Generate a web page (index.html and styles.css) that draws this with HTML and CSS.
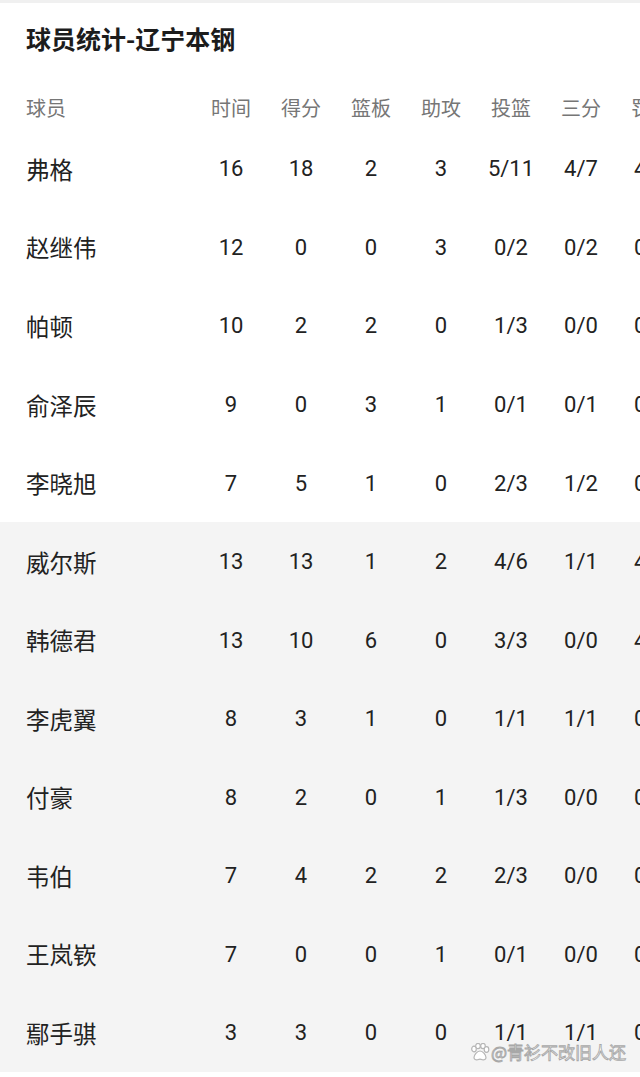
FILE: index.html
```html
<!DOCTYPE html>
<html lang="zh">
<head>
<meta charset="utf-8">
<link rel="stylesheet" href="styles.css">
</head>
<body>
<div class="page">
  <div class="topband"></div>
  <h1 class="title">球员统计-辽宁本钢</h1>
  <div class="row head">
    <span class="name">球员</span><span>时间</span><span>得分</span><span>篮板</span><span>助攻</span><span>投篮</span><span>三分</span><span>罚球</span>
  </div>
  <div class="row"><span class="name">弗格</span><span>16</span><span>18</span><span>2</span><span>3</span><span>5/11</span><span>4/7</span><span>4/4</span></div>
  <div class="row"><span class="name">赵继伟</span><span>12</span><span>0</span><span>0</span><span>3</span><span>0/2</span><span>0/2</span><span>0/0</span></div>
  <div class="row"><span class="name">帕顿</span><span>10</span><span>2</span><span>2</span><span>0</span><span>1/3</span><span>0/0</span><span>0/0</span></div>
  <div class="row"><span class="name">俞泽辰</span><span>9</span><span>0</span><span>3</span><span>1</span><span>0/1</span><span>0/1</span><span>0/0</span></div>
  <div class="row"><span class="name">李晓旭</span><span>7</span><span>5</span><span>1</span><span>0</span><span>2/3</span><span>1/2</span><span>0/0</span></div>
  <div class="bench">
    <div class="row"><span class="name">威尔斯</span><span>13</span><span>13</span><span>1</span><span>2</span><span>4/6</span><span>1/1</span><span>4/4</span></div>
    <div class="row"><span class="name">韩德君</span><span>13</span><span>10</span><span>6</span><span>0</span><span>3/3</span><span>0/0</span><span>4/6</span></div>
    <div class="row"><span class="name">李虎翼</span><span>8</span><span>3</span><span>1</span><span>0</span><span>1/1</span><span>1/1</span><span>0/0</span></div>
    <div class="row"><span class="name">付豪</span><span>8</span><span>2</span><span>0</span><span>1</span><span>1/3</span><span>0/0</span><span>0/0</span></div>
    <div class="row"><span class="name">韦伯</span><span>7</span><span>4</span><span>2</span><span>2</span><span>2/3</span><span>0/0</span><span>0/0</span></div>
    <div class="row"><span class="name">王岚嵚</span><span>7</span><span>0</span><span>0</span><span>1</span><span>0/1</span><span>0/0</span><span>0/0</span></div>
    <div class="row"><span class="name">鄢手骐</span><span>3</span><span>3</span><span>0</span><span>0</span><span>1/1</span><span>1/1</span><span>0/0</span></div>
  </div>
  <div class="watermark">
    <svg class="paw" width="20" height="18" viewBox="0 0 20 18">
      <g fill="#fff" stroke="#b5b5b5" stroke-width="1.2">
        <ellipse cx="4" cy="6" rx="2.3" ry="2.8"/>
        <ellipse cx="8" cy="3" rx="2.3" ry="2.6"/>
        <ellipse cx="13" cy="3" rx="2.3" ry="2.6"/>
        <ellipse cx="16.5" cy="6.5" rx="2.3" ry="2.8"/>
        <path d="M10 8c-3 0-6 4-6 6.5 0 2 2 2.8 3.5 2.3 1.2-.4 1.8-.6 2.5-.6s1.3.2 2.5.6c1.5.5 3.5-.3 3.5-2.3C16 12 13 8 10 8z"/>
      </g>
    </svg>
    <span>@青衫不改旧人还</span>
  </div>
</div>
</body>
</html>
```
FILE: styles.css
```css
html, body {
  margin: 0;
  padding: 0;
  background: #ffffff;
}
body {
  width: 640px;
  overflow-x: hidden;
  font-family: Roboto, "Noto Sans CJK SC", sans-serif;
}
.page {
  position: relative;
  width: 640px;
  height: 1077px;
  overflow: hidden;
}
.topband {
  height: 3px;
  background: #f0f0f0;
}
.title {
  margin: 0;
  padding: 20px 0 0 26px;
  height: 30px;
  line-height: 30px;
  font-size: 25px;
  font-weight: 700;
  color: #1c1c1c;
  font-family: "Noto Sans CJK SC", sans-serif;
}
.row {
  display: grid;
  grid-template-columns: 196px repeat(7, 70px);
  align-items: center;
  height: 78.55px;
  font-size: 22px;
  color: #222222;
  white-space: nowrap;
}
.row span {
  text-align: center;
}
.row .name {
  text-align: left;
  padding-left: 26px;
  font-size: 23.5px;
  font-family: "Noto Sans CJK SC", sans-serif;
}
.row.head {
  height: 44.6px;
  margin-top: 32px;
  font-size: 20px;
  color: #767676;
  font-family: "Noto Sans CJK SC", sans-serif;
}
.row.head .name {
  font-size: 20px;
}
.bench {
  background: #f4f4f4;
}
.watermark {
  position: absolute;
  right: 14px;
  bottom: 13px;
  display: flex;
  align-items: center;
  gap: 1px;
  font-family: "Noto Sans CJK SC", sans-serif;
  font-size: 17px;
  color: #ffffff;
  -webkit-text-stroke: 0.9px #a8a8a8;
}
.paw {
  display: block;
}
```
